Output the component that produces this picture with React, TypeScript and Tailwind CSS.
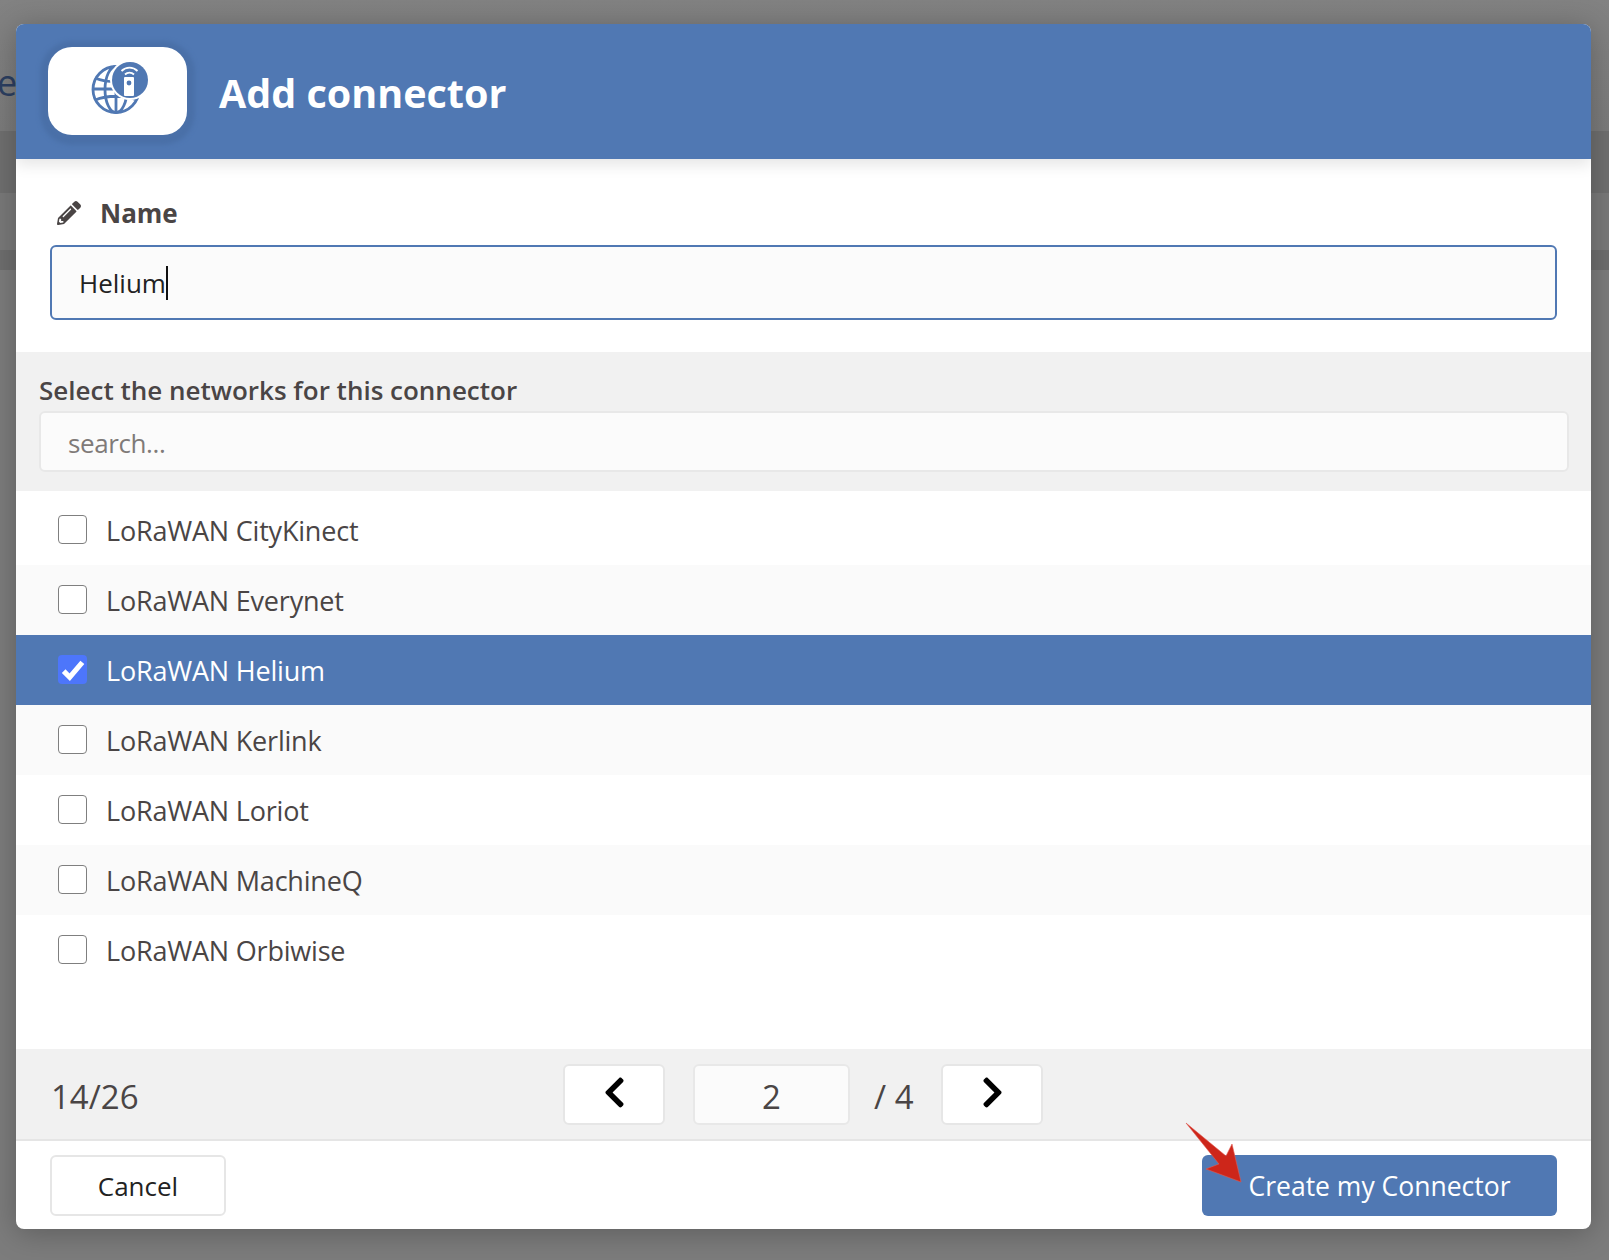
import { FaChevronLeft, FaChevronRight, FaPencilAlt } from "react-icons/fa";

const networks = [
  { name: "LoRaWAN CityKinect" },
  { name: "LoRaWAN Everynet" },
  { name: "LoRaWAN Helium", checked: true },
  { name: "LoRaWAN Kerlink" },
  { name: "LoRaWAN Loriot" },
  { name: "LoRaWAN MachineQ" },
  { name: "LoRaWAN Orbiwise" },
];

function ConnectorIcon() {
  return (
    <svg viewBox="90 60 60 56" width={60} height={56} className="ml-[5px] mb-[6px]">
      <g fill="none" stroke="#5078b3" strokeWidth={2.8}>
        <circle cx={116} cy={89.5} r={23} />
        <ellipse cx={116} cy={89.5} rx={11} ry={23} />
        <path d="M116 66v46M95 78c12 5 30 5 42 0M93 89h46M95 100c12-5 30-5 42 0" />
      </g>
      <circle cx={130} cy={80} r={20} fill="#fff" />
      <circle cx={130} cy={80} r={18} fill="#5078b3" />
      <rect x={124} y={77} width={10} height={19} rx={1} fill="#fff" />
      <circle cx={129} cy={83} r={2.4} fill="#5078b3" />
      <path d="M125 74.500c2.500-2.400 6.500-2.400 9 0M121.500 71c4.500-4.400 11.500-4.400 16 0" fill="none" stroke="#fff" strokeWidth={1.8} />
    </svg>
  );
}

function NetworkRow({ name, checked, index }: { name: string; checked?: boolean; index: number }) {
  return (
    <div
      className={`flex h-[70px] items-center gap-[19px] pl-[42px] ${
        checked ? "bg-[#5078b3] text-white" : index % 2 === 1 ? "bg-[#fafafa] text-[#4a4545]" : "bg-white text-[#4a4545]"
      }`}
    >
      {checked ? (
        <span className="mb-[1px] flex h-[29px] w-[29px] items-center justify-center rounded-[4px] bg-[#4d76fb]">
          <svg viewBox="0 0 24 24" width={28} height={28}>
            <path d="M4 13l5.200 5.200L20 5.500" fill="none" stroke="#fff" strokeWidth={4.4} />
          </svg>
        </span>
      ) : (
        <span className="mb-[1px] h-[29px] w-[29px] rounded-[4px] border border-[#7f7f7f] bg-white" />
      )}
      <span className="text-[27px] leading-none tracking-[-0.2px]">{name}</span>
    </div>
  );
}

export default function App() {
  return (
    <div className="relative h-[1260px] overflow-hidden bg-[#7c7c7c] font-['Open_Sans','Noto_Sans',sans-serif]">
      {/* page behind the overlay */}
      <div className="h-[131px] bg-gradient-to-b from-[#828282] to-[#7b7b7b] pt-[60px]">
        <div className="-ml-[3px] text-[36px] leading-[46px] text-[#2c3f61]">ea</div>
      </div>
      <div className="h-[62px] bg-[#6f6f6f]" />
      <div className="h-[57px] bg-[#797979]" />
      <div className="h-[20px] bg-[#6e6e6e]" />

      {/* modal */}
      <div className="absolute left-[16px] top-[24px] flex h-[1205px] w-[1575px] flex-col overflow-hidden rounded-[8px] bg-white shadow-[0_4px_30px_rgba(0,0,0,0.25)]">
        <header className="relative z-10 flex h-[135px] shrink-0 items-center bg-[#5078b3] pb-[1px] pl-[32px] shadow-[0_6px_14px_rgba(0,0,0,0.1)]">
          <div className="flex h-[88px] w-[139px] items-center justify-center rounded-[24px] bg-white shadow-[0_2px_4px_8px_#4a70a8]">
            <ConnectorIcon />
          </div>
          <h1 className="ml-[32px] mt-[6px] text-[39.500px] font-bold leading-none text-white">Add connector</h1>
        </header>

        <section className="h-[193px] shrink-0 px-[34px] pt-[36px]">
          <div className="flex h-[36px] items-center gap-[19px] pl-[7px] text-[#4a4545]">
            <FaPencilAlt size={24} />
            <span className="text-[26px] font-bold leading-none">Name</span>
          </div>
          <div className="mt-[14px] flex h-[75px] items-center rounded-[6px] border-2 border-[#5078b3] bg-[#fbfbfb] pl-[27px] text-[26px] text-[#222]">
            <span className="pt-[1px]">Helium</span>
            <span className="h-[34px] w-[2px] bg-[#111]" />
          </div>
        </section>

        <section className="h-[139px] shrink-0 bg-[#f1f1f1] pl-[23px] pr-[22px] pt-[17px]">
          <div className="text-[26px] font-semibold leading-[42px] text-[#4a4545]">Select the networks for this connector</div>
          <div className="flex h-[61px] items-center rounded-[6px] border-2 border-[#e8e8e8] bg-[#fbfbfb] pl-[27px] pt-[3px] text-[26px] tracking-[-0.4px] text-[#7f7a78]">
            search...
          </div>
        </section>

        <div className="h-[558px] shrink-0 pt-[4px]">
          {networks.map((n, i) => (
            <NetworkRow key={n.name} name={n.name} checked={n.checked} index={i} />
          ))}
        </div>

        <div className="grid h-[92px] shrink-0 grid-cols-[1fr_auto_1fr] items-center border-b-2 border-[#e5e5e5] bg-[#f1f1f1] pl-[35px] pr-[36px] text-[33px] text-[#4a4545]">
          <span className="pt-[6px]">14/26</span>
          <div className="flex items-center">
            <button className="flex h-[61px] w-[102px] items-center justify-center rounded-[6px] border-2 border-[#e6e6e6] bg-white pb-[4px] text-black">
              <FaChevronLeft size={35} />
            </button>
            <div className="ml-[28px] flex h-[61px] w-[157px] items-center justify-center rounded-[6px] border-2 border-[#e8e8e8] bg-[#fbfbfb] pt-[5px]">2</div>
            <span className="ml-[24px] w-[67px] pt-[6px]">/ 4</span>
            <button className="flex h-[61px] w-[102px] items-center justify-center rounded-[6px] border-2 border-[#e6e6e6] bg-white pb-[4px] text-black">
              <FaChevronRight size={35} />
            </button>
          </div>
        </div>

        <footer className="flex flex-1 items-start justify-between px-[34px] pt-[14px]">
          <button className="h-[61px] w-[176px] rounded-[6px] border-2 border-[#e6e6e6] bg-white pt-[2px] text-[26px] text-[#222]">Cancel</button>
          <button className="h-[61px] w-[355px] rounded-[6px] bg-[#5078b3] pt-[2px] text-[26.500px] text-white">Create my Connector</button>
        </footer>
      </div>

      {/* annotation arrow */}
      <svg className="absolute left-[1180px] top-[1118px]" width={70} height={70} viewBox="1180 1118 70 70">
        <path d="M1186 1123L1226 1156L1232 1144L1241 1182L1206 1169L1219 1164Z" fill="#cd261a" stroke="#e05a50" strokeWidth={0.6} />
      </svg>
    </div>
  );
}
